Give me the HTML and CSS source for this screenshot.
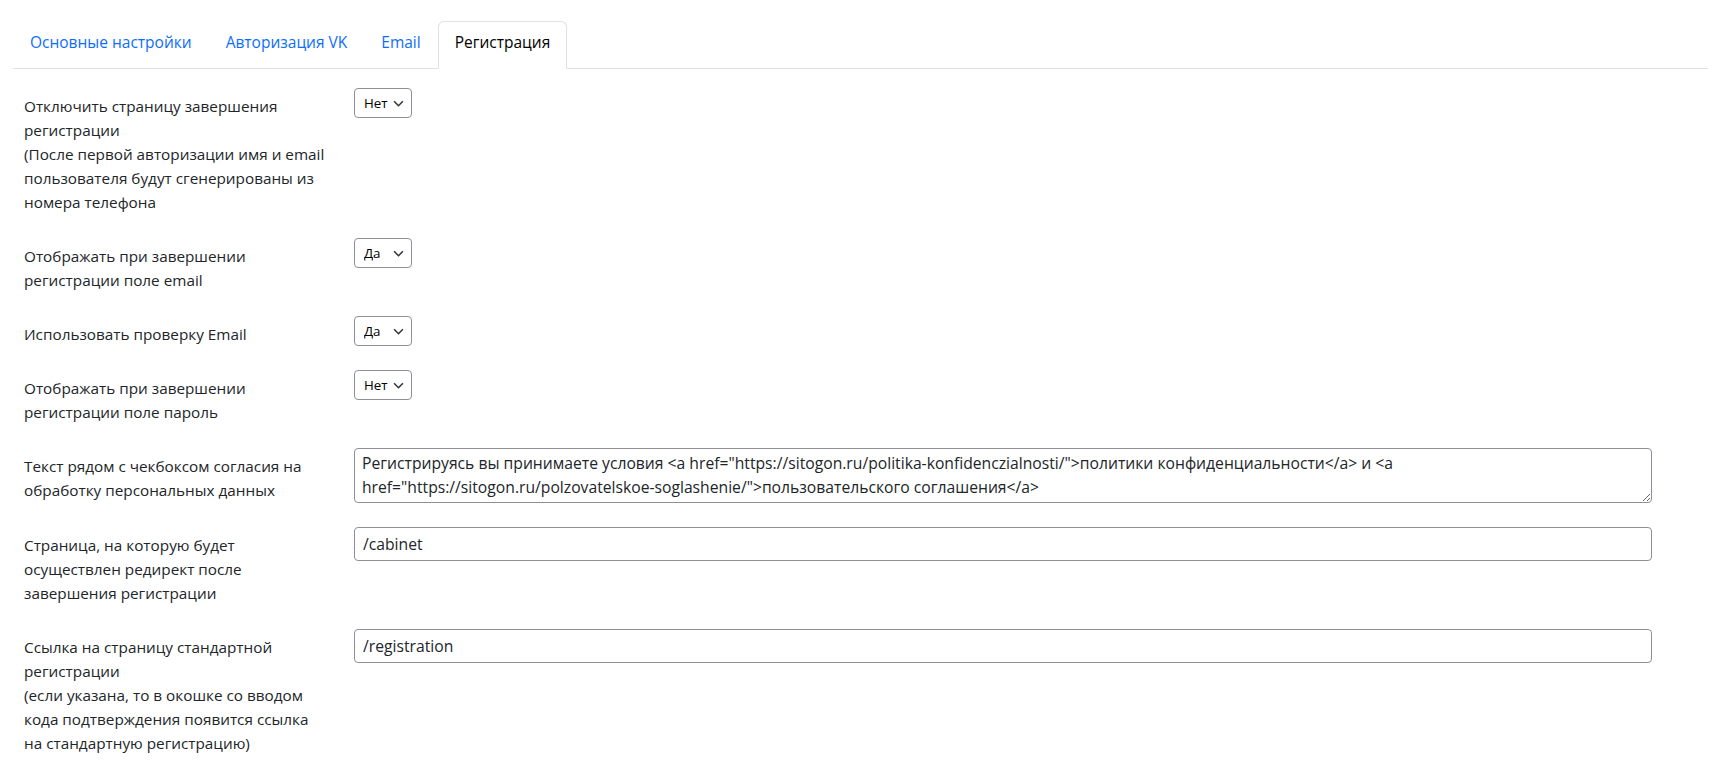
FILE: index.html
```html
<!DOCTYPE html>
<html lang="ru">

<head>
    <meta charset="UTF-8">
    <title>Настройки</title>
    <link rel="stylesheet" href="styles.css">
</head>

<body>
    <div class="page">
        <ul class="tabs">
            <li><a href="#">Основные настройки</a></li>
            <li><a href="#">Авторизация VK</a></li>
            <li><a href="#">Email</a></li>
            <li class="on"><a href="#">Регистрация</a></li>
        </ul>

        <div class="form">
            <div class="row">
                <div class="label">Отключить страницу завершения регистрации<br>(После первой авторизации имя и email пользователя будут сгенерированы из номера телефона</div>
                <div class="control">
                    <span class="select">
                        <select><option>Нет</option><option>Да</option></select>
                        <svg viewBox="0 0 10 6"><path d="M1 1l4 4 4-4" /></svg>
                    </span>
                </div>
            </div>
            <div class="row">
                <div class="label">Отображать при завершении регистрации поле email</div>
                <div class="control">
                    <span class="select">
                        <select><option>Да</option><option>Нет</option></select>
                        <svg viewBox="0 0 10 6"><path d="M1 1l4 4 4-4" /></svg>
                    </span>
                </div>
            </div>
            <div class="row">
                <div class="label">Использовать проверку Email</div>
                <div class="control">
                    <span class="select">
                        <select><option>Да</option><option>Нет</option></select>
                        <svg viewBox="0 0 10 6"><path d="M1 1l4 4 4-4" /></svg>
                    </span>
                </div>
            </div>
            <div class="row">
                <div class="label">Отображать при завершении регистрации поле пароль</div>
                <div class="control">
                    <span class="select">
                        <select><option>Нет</option><option>Да</option></select>
                        <svg viewBox="0 0 10 6"><path d="M1 1l4 4 4-4" /></svg>
                    </span>
                </div>
            </div>
            <div class="row">
                <div class="label">Текст рядом с чекбоксом согласия на обработку персональных данных</div>
                <div class="control">
                    <textarea class="text">Регистрируясь вы принимаете условия &lt;a href="https://sitogon.ru/politika-konfidenczialnosti/"&gt;политики конфиденциальности&lt;/a&gt; и &lt;a href="https://sitogon.ru/polzovatelskoe-soglashenie/"&gt;пользовательского соглашения&lt;/a&gt;</textarea>
                </div>
            </div>
            <div class="row">
                <div class="label">Страница, на которую будет осуществлен редирект после завершения регистрации</div>
                <div class="control">
                    <input class="text" type="text" value="/cabinet">
                </div>
            </div>
            <div class="row">
                <div class="label">Ссылка на страницу стандартной регистрации<br>(если указана, то в окошке со вводом кода подтверждения появится ссылка на стандартную регистрацию)</div>
                <div class="control">
                    <input class="text" type="text" value="/registration">
                </div>
            </div>
        </div>
    </div>
</body>

</html>
```

FILE: styles.css
```css
* {
    padding: 0;
    margin: 0;
    box-sizing: border-box;
}

ul,
li {
    list-style: none;
}

body {
    font-family: "Open Sans", "Noto Sans", sans-serif;
    font-size: 15.3px;
    line-height: 24px;
    color: #212529;
    background: #fff;
}

.page {
    padding: 21px 12px 0 13px;
}

.tabs {
    display: flex;
    border-bottom: 1px solid #dee2e6;
}

.tabs>li {
    margin-bottom: -1px;
}

.tabs a {
    display: block;
    padding: 8px 16px 14px;
    font-size: 15.5px;
    line-height: 24px;
    color: #0d6efd;
    text-decoration: none;
    border: 1px solid transparent;
    border-radius: 6px 6px 0 0;
}

.tabs>li.on a {
    color: #000;
    background: #fff;
    border-color: #dee2e6 #dee2e6 #fff;
}

.form {
    padding: 19px 0 0 11px;
}

.row {
    display: flex;
    margin-bottom: 24px;
}

.label {
    width: 330px;
    padding: 6px 26px 0 0;
}

.control {
    flex: none;
}

.select {
    position: relative;
    display: inline-block;
}

.select select {
    appearance: none;
    -webkit-appearance: none;
    width: 58px;
    height: 30px;
    padding: 0 0 0 9px;
    font-family: inherit;
    font-size: 13.33px;
    color: #000;
    background: #fff;
    border: 1px solid #8f8f9d;
    border-radius: 4px;
}

.select svg {
    position: absolute;
    right: 8px;
    top: 12px;
    width: 11px;
    height: 7px;
    fill: none;
    stroke: #333;
    stroke-width: 1.4;
    pointer-events: none;
}

.text {
    display: block;
    width: 1298px;
    font-family: inherit;
    font-size: 15.7px;
    color: #212529;
    background: #fff;
    border: 1px solid #8f8f9d;
    border-radius: 4px;
}

textarea.text {
    height: 55px;
    padding: 2px 7px;
    line-height: 24px;
    resize: vertical;
}

input.text {
    height: 34px;
    padding: 0 8px;
}
```
